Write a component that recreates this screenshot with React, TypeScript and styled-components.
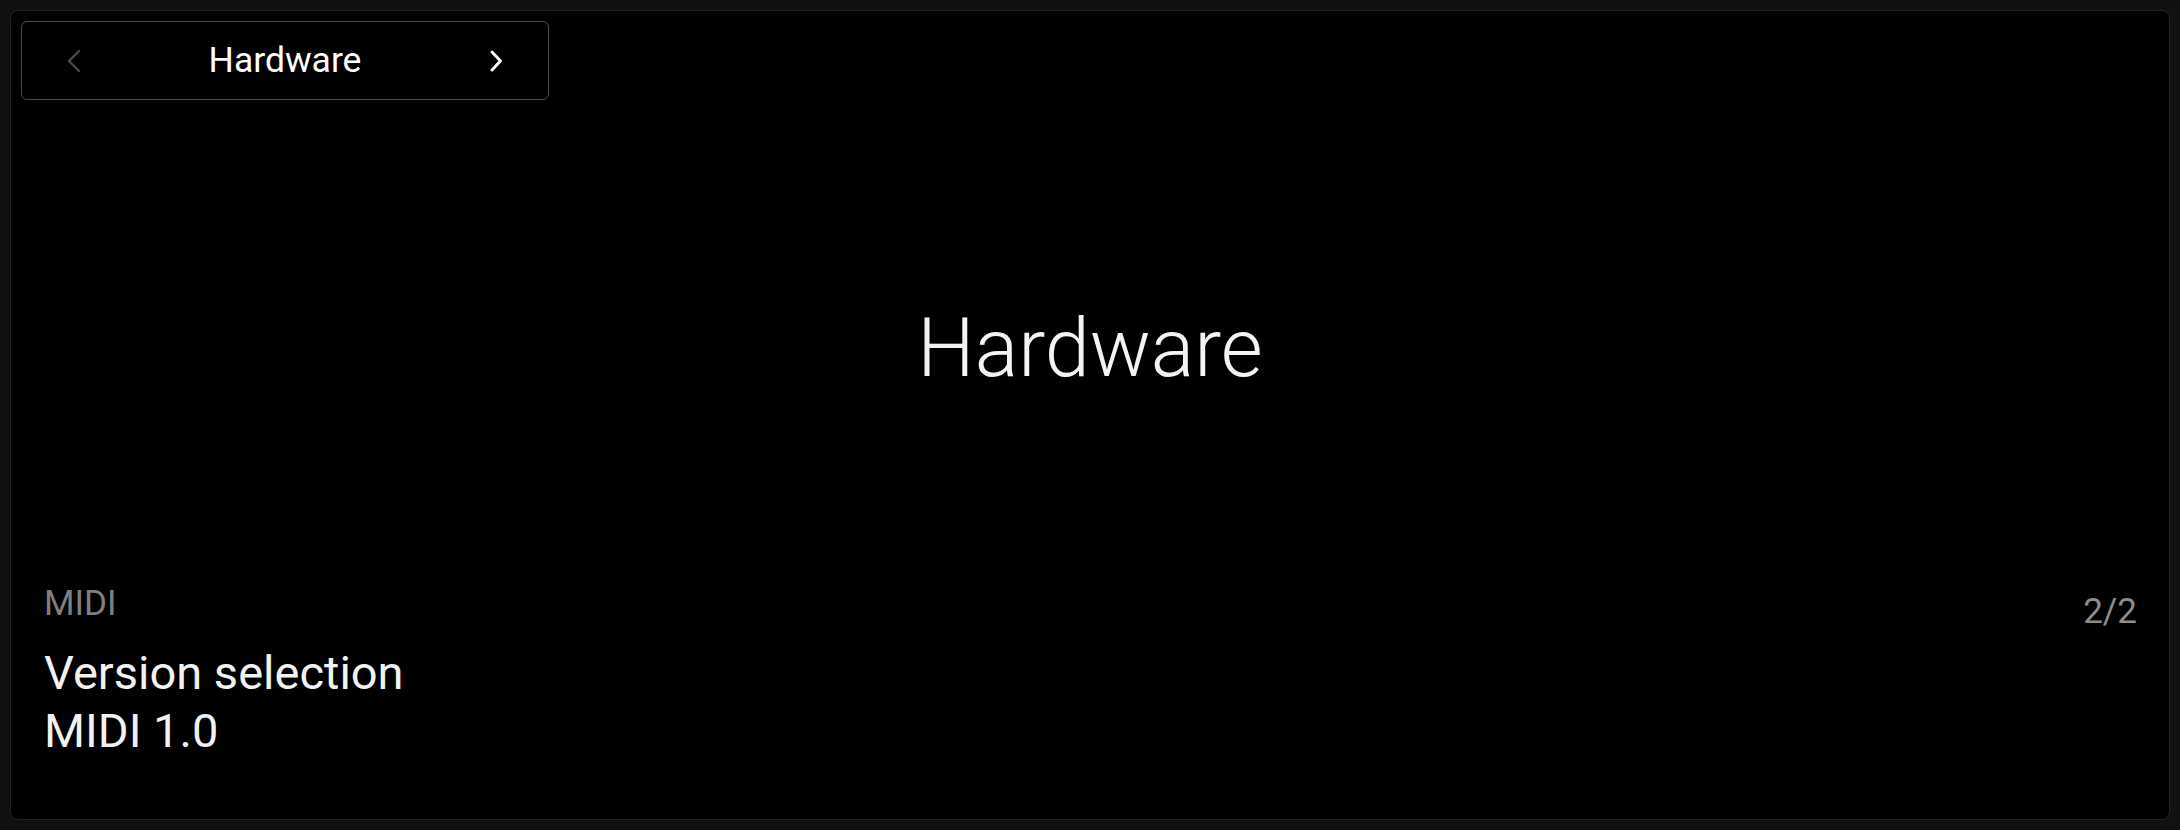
import React from "react";
import styled, { createGlobalStyle } from "styled-components";

const Global = createGlobalStyle`
  html, body { margin: 0; padding: 0; background: #111111; }
  body { font-family: Roboto, "Noto Sans", "Liberation Sans", sans-serif; }
  * { box-sizing: border-box; }
`;

const Page = styled.div`
  width: 2180px;
  height: 830px;
  padding: 10px;
  background: #111111;
`;

const Panel = styled.div`
  height: 100%;
  background: #000;
  border: 1px solid #232323;
  border-radius: 8px;
  display: flex;
  flex-direction: column;
  padding: 10px 10px 0 10px;
`;

const Header = styled.div`
  display: flex;
`;

const Nav = styled.div`
  width: 528px;
  height: 79px;
  border: 1px solid #4a4a4a;
  border-radius: 6px;
  display: flex;
  align-items: center;
  justify-content: space-between;
  padding: 0 44px 0 44px;
`;

const NavTitle = styled.span`
  font-size: 35.5px;
  color: #ffffff;
  font-weight: 400;
  line-height: 1;
`;

const Chevron = styled.svg<{ $active?: boolean }>`
  display: block;
  width: 16px;
  height: 24px;
  stroke: ${(p) => (p.$active ? "#ffffff" : "#4a4a4a")};
  stroke-width: ${(p) => (p.$active ? 3 : 2.4)};
  fill: none;
  stroke-linecap: round;
  stroke-linejoin: round;
`;

const Main = styled.div`
  flex: 1;
  display: flex;
  align-items: center;
  justify-content: center;
  padding-top: 14px;
`;

const BigTitle = styled.h1`
  margin: 0;
  font-size: 81px;
  font-weight: 300;
  color: #f4f4f4;
  line-height: 1.172;
`;

const Footer = styled.div`
  display: flex;
  justify-content: space-between;
  align-items: flex-start;
  padding: 0 22px 59px 23px;
`;

const Info = styled.div`
  display: flex;
  flex-direction: column;
`;

const Category = styled.div`
  font-size: 35px;
  line-height: 40px;
  color: #7f7f7f;
  margin-bottom: 20px;
`;

const Value = styled.div`
  font-size: 47px;
  line-height: 58px;
  color: #f2f2f2;
`;

const Counter = styled.div`
  font-size: 35px;
  line-height: 42px;
  color: #8c8c8c;
  margin-top: 7px;
`;

export default function App() {
  return (
    <>
      <Global />
      <Page>
        <Panel>
          <Header>
            <Nav>
              <Chevron viewBox="0 0 16 24">
                <polyline points="13,2 3,12 13,22" />
              </Chevron>
              <NavTitle>Hardware</NavTitle>
              <Chevron $active viewBox="0 0 16 24">
                <polyline points="4,3 12.5,12 4,21" />
              </Chevron>
            </Nav>
          </Header>
          <Main>
            <BigTitle>Hardware</BigTitle>
          </Main>
          <Footer>
            <Info>
              <Category>MIDI</Category>
              <Value>Version selection</Value>
              <Value>MIDI 1.0</Value>
            </Info>
            <Counter>2/2</Counter>
          </Footer>
        </Panel>
      </Page>
    </>
  );
}
